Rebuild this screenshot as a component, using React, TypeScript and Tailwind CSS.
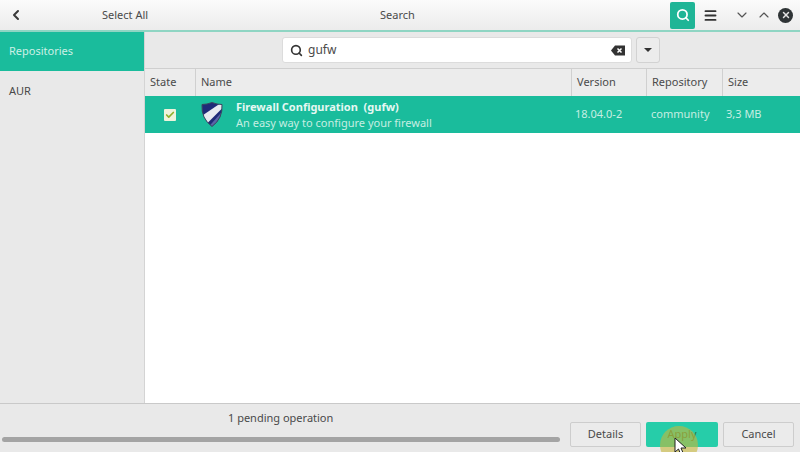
// App.tsx
import { ChevronLeft, ChevronDown, ChevronUp, Search, Menu, X, Check } from 'lucide-react';

function Shield() {
  return (
    <svg width="22" height="27" viewBox="0 0 22 26">
      <defs>
        <clipPath id="shield">
          <path d="M1 3 Q6 3 11 1 Q16 3 21 3 Q22 17 11 25 Q0 17 1 3 Z" />
        </clipPath>
      </defs>
      <g clipPath="url(#shield)">
        <rect width="22" height="26" fill="#1f2a78" />
        <path d="M22 0 L22 6 L4 24 L0 20 L0 15 Z" fill="#e8eaf0" />
        <path d="M22 9 L22 14 L12 26 L7 26 Z" fill="#5a64a8" />
      </g>
      <path d="M1 3 Q6 3 11 1 Q16 3 21 3 Q22 17 11 25 Q0 17 1 3 Z" fill="none" stroke="#3a4560" strokeWidth="1" />
    </svg>
  );
}

function ColumnHead({ label, className }: { label: string; className: string }) {
  return (
    <div className={`flex items-center pl-[5px] border-r border-[#d0d0d0] ${className}`}>
      {label}
    </div>
  );
}

export default function App() {
  return (
    <div className="w-[800px] h-[452px] flex flex-col overflow-hidden bg-[#e9e9e9] text-[#4a4a4a] text-[11px] font-['Noto_Sans',sans-serif]">
      {/* Header */}
      <div className="h-[30px] shrink-0 flex items-center bg-gradient-to-b from-[#fbfbfb] to-[#ececec]">
        <ChevronLeft className="ml-[8px] w-[16px] h-[16px] text-[#3a3a3a]" strokeWidth={3} />
        <div className="w-[218px] pl-[78px]">Select All</div>
        <div className="w-[428px] pl-[138px]">Search</div>
        <div className="w-[25px] h-[27px] flex items-center justify-center rounded-[2px] bg-[#1fb596]">
          <Search className="w-[14px] h-[14px] text-white" strokeWidth={3} />
        </div>
        <Menu className="ml-[8px] w-[15px] h-[15px] text-[#333333]" strokeWidth={3} />
        <ChevronDown className="ml-[16px] w-[16px] h-[16px] text-[#555555]" strokeWidth={1.75} />
        <ChevronUp className="ml-[6px] w-[16px] h-[16px] text-[#555555]" strokeWidth={1.75} />
        <div className="ml-[6px] w-[15px] h-[15px] rounded-full bg-[#2f3436] flex items-center justify-center">
          <X className="w-[10px] h-[10px] text-[#e4e4e4]" strokeWidth={3.5} />
        </div>
      </div>
      <div className="h-[2px] shrink-0 bg-[#8fd5c3]" />

      {/* Body */}
      <div className="flex-1 min-h-0 flex">
        {/* Sidebar */}
        <div className="w-[145px] shrink-0 border-r border-[#d4d4d4]">
          <div className="h-[39px] flex items-center pl-[9px] bg-[#1abc9c] text-[#cdf0e6]">Repositories</div>
          <div className="h-[40px] flex items-center pl-[9px]">AUR</div>
        </div>

        {/* Main */}
        <div className="flex-1 min-w-0 flex flex-col">
          <div className="h-[37px] shrink-0 flex items-center pl-[137px] border-b border-[#cfcfcf]">
            <div className="w-[350px] h-[26px] flex items-center bg-white border border-[#dcdcdc] rounded-[3px] text-[12px]">
              <Search className="ml-[7px] w-[13px] h-[13px] text-[#333333]" strokeWidth={3} />
              <span className="ml-[5px] flex-1">gufw</span>
              <svg className="mr-[6px]" width="14" height="11" viewBox="0 0 14 11">
                <path d="M0 5.5 L4 0.5 L14 0.5 L14 10.5 L4 10.5 Z" fill="#333333" />
                <path d="M6.5 3.5 L10.5 7.5 M10.5 3.5 L6.5 7.5" stroke="#ffffff" strokeWidth="1.5" />
              </svg>
            </div>
            <div className="ml-[4px] w-[24px] h-[26px] flex items-center justify-center bg-[#ececec] border border-[#d2d2d2] rounded-[3px]">
              <div className="w-0 h-0 border-x-[4px] border-x-transparent border-t-[4px] border-t-[#333333]" />
            </div>
          </div>

          {/* Table head */}
          <div className="h-[27px] shrink-0 flex bg-[#ececec]">
            <ColumnHead label="State" className="w-[51px]" />
            <ColumnHead label="Name" className="w-[376px]" />
            <ColumnHead label="Version" className="w-[75px]" />
            <ColumnHead label="Repository" className="w-[76px]" />
            <div className="flex-1 flex items-center pl-[5px]">Size</div>
          </div>

          {/* Table body */}
          <div className="flex-1 min-h-0 bg-white">
            <div className="h-[37px] flex items-center bg-[#1abc9c] text-[#c6eee2]">
              <div className="w-[50px] flex justify-center">
                <div className="w-[12px] h-[12px] rounded-[1px] bg-[#eef3dc] flex items-center justify-center">
                  <Check className="w-[10px] h-[10px] text-[#8fb02c]" strokeWidth={4} />
                </div>
              </div>
              <div className="w-[377px] flex items-center pl-[6px]">
                <Shield />
                <div className="ml-[13px] leading-[16px]">
                  <div className="font-bold text-[#e6f8f3]">Firewall Configuration&nbsp; (gufw)</div>
                  <div>An easy way to configure your firewall</div>
                </div>
              </div>
              <div className="w-[75px] pl-[3px]">18.04.0-2</div>
              <div className="w-[76px] pl-[4px]">community</div>
              <div className="pl-[3px]">3,3 MB</div>
            </div>
          </div>
        </div>
      </div>

      {/* Footer */}
      <div className="relative h-[49px] shrink-0 flex border-t border-[#c9c9c9]">
        <div className="w-[565px] shrink-0 flex flex-col">
          <div className="pl-[228px] pt-[6px]">1 pending operation</div>
          <div className="mt-[10px] ml-[2px] h-[5px] w-[558px] rounded-full bg-[#a4a4a4]" />
        </div>
        <div className="pt-[18px] pl-[5px] flex gap-[5px]">
          <div className="w-[71px] h-[25px] flex items-center justify-center rounded-[2px] bg-[#ebebeb] border border-[#cdcdcd]">Details</div>
          <div className="w-[72px] h-[25px] flex items-center justify-center rounded-[2px] bg-[#26cda9] text-[#2f7a40]">Apply</div>
          <div className="w-[71px] h-[25px] flex items-center justify-center rounded-[2px] bg-[#ebebeb] border border-[#cdcdcd]">Cancel</div>
        </div>
        {/* Click highlight and cursor */}
        <div className="absolute left-[660px] top-[22px] w-[38px] h-[38px] rounded-full bg-[#c8b83a]/60" />
        <svg className="absolute left-[674px] top-[33px]" width="14" height="19" viewBox="0 0 14 19">
          <path d="M1 1 L1 15 L4.5 12 L7 18 L9.5 17 L7 11 L12 11 Z" fill="#ffffff" stroke="#222222" strokeWidth="1" />
        </svg>
      </div>
    </div>
  );
}
